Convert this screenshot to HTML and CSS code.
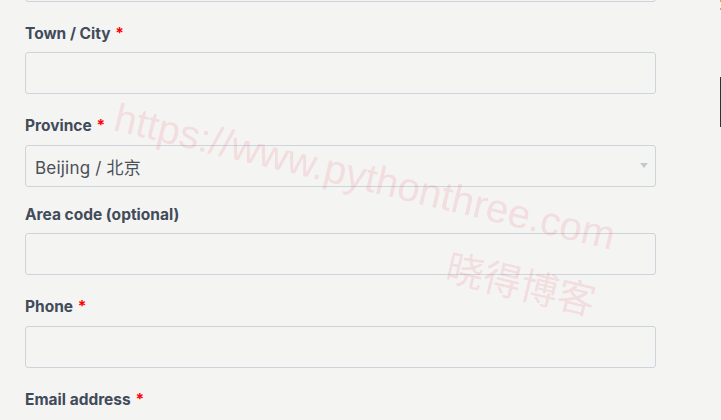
FILE: index.html
```html
<!DOCTYPE html>
<html lang="en">
<head>
<meta charset="utf-8">
<title>Checkout – Billing details</title>
<link rel="stylesheet" href="styles.css">
</head>
<body>
<div class="page">
  <main class="form-col">
    <div class="field field--prev">
      <input class="input" type="text" aria-label="Street address">
    </div>

    <div class="field">
      <label class="label">Town / City <abbr class="required" title="required">*</abbr></label>
      <input class="input" type="text">
    </div>

    <div class="field field--select">
      <label class="label">Province <abbr class="required" title="required">*</abbr></label>
      <div class="select">
        <span class="select-text">Beijing / 北京</span>
        <span class="select-arrow"></span>
      </div>
    </div>

    <div class="field">
      <label class="label">Area code (optional)</label>
      <input class="input" type="text">
    </div>

    <div class="field">
      <label class="label">Phone <abbr class="required" title="required">*</abbr></label>
      <input class="input" type="text">
    </div>

    <div class="field field--last">
      <label class="label">Email address <abbr class="required" title="required">*</abbr></label>
    </div>
  </main>

  <aside class="sidebar">
    <div class="sb-dots"></div>
    <div class="sb-button"></div>
  </aside>

  <div class="watermark" aria-hidden="true">
    <span class="wm-url">https://www.pythonthree.com</span>
    <span class="wm-cn">晓得博客</span>
  </div>
</div>
</body>
</html>
```

FILE: styles.css
```css
html, body {
  margin: 0;
  padding: 0;
  height: 100%;
  overflow: hidden;
  background: #f4f4f2;
}

.page {
  position: relative;
  display: flex;
  align-items: flex-start;
  height: 100%;
  overflow: hidden;
}

.form-col {
  flex: 0 0 720px;
  box-sizing: border-box;
  padding: 0 64px 0 25px;
}

.field {
  margin-bottom: 22px;
}

.field--prev {
  margin-top: -40px;
  margin-bottom: 21.5px;
}

.field--select {
  margin-bottom: 18px;
}

.field--last {
  margin-bottom: 0;
}

.label {
  display: block;
  font-family: Inter, "Liberation Sans", sans-serif;
  font-weight: 700;
  font-size: 15.5px;
  line-height: 20px;
  color: #414b5a;
  margin-bottom: 8.5px;
}

.required {
  color: #ff0000;
  text-decoration: none;
  border: none;
  font-weight: 700;
  margin-left: 1px;
}

.input {
  display: block;
  width: 100%;
  height: 42px;
  box-sizing: border-box;
  margin: 0;
  padding: 0 9px;
  border: 1px solid #cdd4db;
  border-radius: 3px;
  background: #f4f4f2;
  font-family: Inter, sans-serif;
  font-size: 16px;
}

.field .label + .input,
.field .label + .select {
  margin-top: 0.5px;
}

.select {
  display: flex;
  align-items: center;
  justify-content: space-between;
  height: 42px;
  box-sizing: border-box;
  padding: 2px 7px 0 9px;
  border: 1px solid #cdd4db;
  border-radius: 3px;
  background: #f4f4f2;
}

.select-text {
  font-family: Inter, "Noto Sans CJK SC", sans-serif;
  font-size: 17px;
  letter-spacing: 0.2px;
  color: #4b5059;
}

.select-arrow {
  width: 0;
  height: 0;
  border-style: solid;
  border-width: 5px 4px 0 4px;
  border-color: #c4c8cc transparent transparent transparent;
  margin-top: -2px;
}

.sidebar {
  flex: 0 0 1px;
  display: flex;
  flex-direction: column;
}

.sb-dots {
  width: 1px;
  height: 10px;
  background: linear-gradient(to bottom, #e8a23a 0 2px, transparent 2px 8px, #e8a23a 8px 10px);
}

.sb-button {
  margin-top: 67px;
  width: 1px;
  height: 50px;
  background: #1d3a35;
}

.watermark {
  position: absolute;
  inset: 0;
  pointer-events: none;
}

.wm-url {
  position: absolute;
  left: 112px;
  top: 96px;
  font-family: "Liberation Sans", Arial, sans-serif;
  font-size: 40px;
  line-height: 40px;
  white-space: nowrap;
  color: rgba(234, 64, 97, 0.15);
  transform-origin: 0 34px;
  transform: rotate(13.5deg);
}

.wm-cn {
  position: absolute;
  left: 452px;
  top: 246px;
  font-family: "Noto Sans CJK SC", sans-serif;
  font-size: 38px;
  line-height: 38px;
  white-space: nowrap;
  color: rgba(234, 64, 97, 0.15);
  transform-origin: 0 0;
  transform: rotate(13.5deg);
}
```
